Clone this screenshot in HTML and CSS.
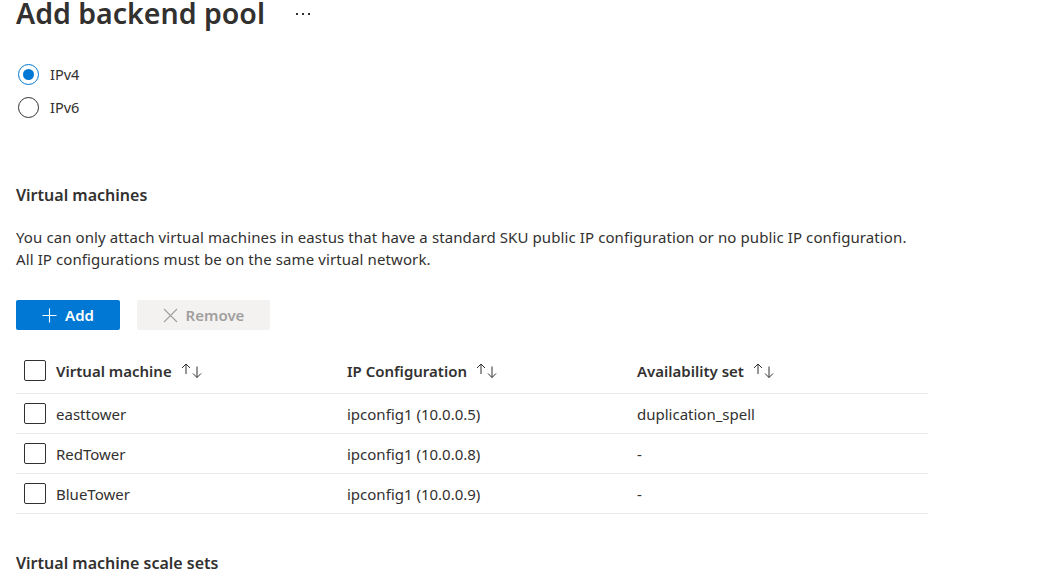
FILE: index.html
```html
<!DOCTYPE html>
<html>
<head>
<meta charset="utf-8">
<link rel="stylesheet" href="styles.css">
</head>
<body>
<div class="page">
  <header class="title-row">
    <h1 class="title">Add backend pool</h1>
    <span class="more" aria-label="More">
      <svg width="16" height="4" viewBox="0 0 16 4"><rect x="1" y="1" width="2" height="2" fill="#323130"/><rect x="7" y="1" width="2" height="2" fill="#323130"/><rect x="13" y="1" width="2" height="2" fill="#323130"/></svg>
    </span>
  </header>

  <div class="radios">
    <label class="radio"><span class="radio-circle checked"></span><span>IPv4</span></label>
    <label class="radio"><span class="radio-circle"></span><span>IPv6</span></label>
  </div>

  <h2 class="section-title">Virtual machines</h2>
  <p class="desc">You can only attach virtual machines in eastus that have a standard SKU public IP configuration or no public IP configuration.<br>All IP configurations must be on the same virtual network.</p>

  <div class="toolbar">
    <button class="btn btn-primary">
      <svg width="15" height="15" viewBox="0 0 15 15"><path d="M7.5 0.5V14.5M0.5 7.5H14.5" stroke="#fff" stroke-width="1.1" fill="none"/></svg>
      <span>Add</span>
    </button>
    <button class="btn btn-disabled">
      <svg width="15" height="15" viewBox="0 0 15 15"><path d="M1 1L14 14M14 1L1 14" stroke="#a19f9d" stroke-width="1.1" fill="none"/></svg>
      <span>Remove</span>
    </button>
  </div>

  <div class="table">
    <div class="row head">
      <div class="cell check"><span class="box"></span></div>
      <div class="cell">Virtual machine <span class="sort"><svg width="22" height="16" viewBox="0 0 22 16"><path d="M5 1V11M1 5L5 1L9 5" stroke="#323130" stroke-width="1" fill="none"/><path d="M16 3.5V14.5M12 10.5L16 14.5L20 10.5" stroke="#323130" stroke-width="1" fill="none"/></svg></span></div>
      <div class="cell">IP Configuration <span class="sort"><svg width="22" height="16" viewBox="0 0 22 16"><path d="M5 1V11M1 5L5 1L9 5" stroke="#323130" stroke-width="1" fill="none"/><path d="M16 3.5V14.5M12 10.5L16 14.5L20 10.5" stroke="#323130" stroke-width="1" fill="none"/></svg></span></div>
      <div class="cell">Availability set <span class="sort"><svg width="22" height="16" viewBox="0 0 22 16"><path d="M5 1V11M1 5L5 1L9 5" stroke="#323130" stroke-width="1" fill="none"/><path d="M16 3.5V14.5M12 10.5L16 14.5L20 10.5" stroke="#323130" stroke-width="1" fill="none"/></svg></span></div>
    </div>
    <div class="row">
      <div class="cell check"><span class="box"></span></div>
      <div class="cell">easttower</div>
      <div class="cell">ipconfig1 (10.0.0.5)</div>
      <div class="cell">duplication_spell</div>
    </div>
    <div class="row">
      <div class="cell check"><span class="box"></span></div>
      <div class="cell">RedTower</div>
      <div class="cell">ipconfig1 (10.0.0.8)</div>
      <div class="cell">-</div>
    </div>
    <div class="row">
      <div class="cell check"><span class="box"></span></div>
      <div class="cell">BlueTower</div>
      <div class="cell">ipconfig1 (10.0.0.9)</div>
      <div class="cell">-</div>
    </div>
  </div>

  <h2 class="section-title bottom">Virtual machine scale sets</h2>
</div>
</body>
</html>
```

FILE: styles.css
```css
* { box-sizing: border-box; }
html, body { margin: 0; padding: 0; background: #fff; }
body {
  font-family: "Noto Sans", "Open Sans", sans-serif;
  color: #323130;
  font-size: 15px;
  overflow: hidden;
  height: 581px;
}
.page { padding: 0 16px; }

.title-row {
  display: flex;
  align-items: center;
  height: 30px;
  margin-top: -2px;
}
.title {
  margin: 0;
  font-size: 28.5px;
  font-weight: 600;
  line-height: 30px;
}
.more {
  display: flex;
  margin-left: 30px;
  margin-top: 2px;
}

.radios {
  display: flex;
  flex-direction: column;
  gap: 12px;
  margin-top: 36px;
}
.radio {
  display: flex;
  align-items: center;
  gap: 11px;
  height: 21px;
  line-height: 21px;
  font-size: 14.5px;
}
.radio-circle {
  width: 21px;
  height: 21px;
  border-radius: 50%;
  border: 1px solid #323130;
  display: flex;
  align-items: center;
  justify-content: center;
  margin-left: 2px;
  flex-shrink: 0;
}
.radio-circle.checked { border-color: #0078d4; }
.radio-circle.checked::after {
  content: "";
  width: 11px;
  height: 11px;
  border-radius: 50%;
  background: #0078d4;
}

.section-title {
  margin: 66px 0 0;
  font-size: 16px;
  font-weight: 600;
  line-height: 22px;
}
.section-title.bottom { margin-top: 38px; }

.desc {
  margin: 20px 0 0;
  line-height: 22px;
  font-size: 15px;
  letter-spacing: 0.1px;
}

.toolbar {
  display: flex;
  gap: 17px;
  margin-top: 30px;
}
.btn {
  height: 30px;
  border: none;
  border-radius: 2px;
  display: flex;
  align-items: center;
  justify-content: center;
  gap: 8px;
  font-family: inherit;
  font-size: 15px;
  font-weight: 600;
  padding: 0;
}
.btn-primary { width: 104px; background: #0078d4; color: #fff; }
.btn-disabled { width: 133px; background: #f3f2f1; color: #a19f9d; }

.table { margin-top: 20px; width: 912px; }
.row {
  display: grid;
  grid-template-columns: 40px 291px 290px 1fr;
  height: 40px;
  align-items: center;
  border-bottom: 1px solid #edebe9;
}
.row.head { height: 44px; font-weight: 600; padding-bottom: 2px; }
.cell { display: flex; align-items: center; white-space: nowrap; }
.cell.check { padding-left: 8px; }
.box {
  width: 22px;
  height: 21px;
  border: 1px solid #323130;
  border-radius: 2px;
}
.sort { display: inline-flex; margin-left: 9px; margin-top: 1px; }
```
